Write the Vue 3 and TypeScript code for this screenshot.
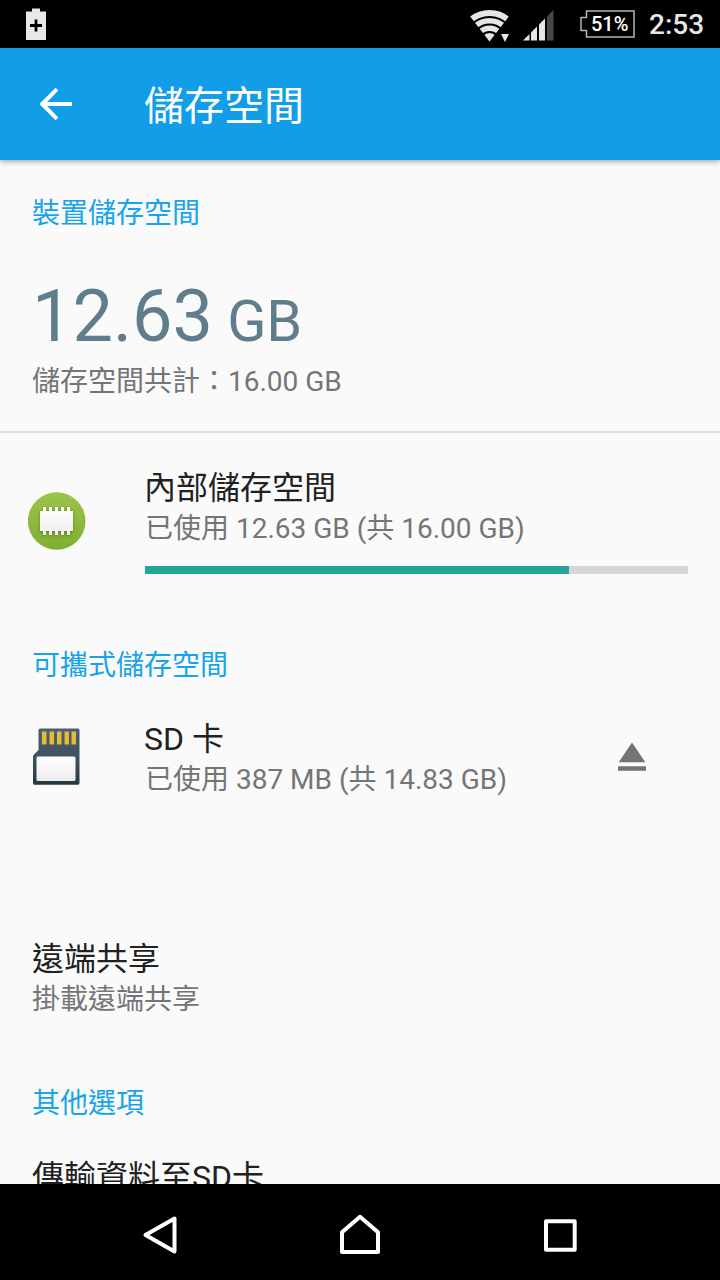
<script setup lang="ts">
const totalGb = 16
const usedGb = 12.5
const usedPercent = (usedGb / totalGb) * 100
</script>

<template>
  <div class="screen">
    <header class="status">
      <svg class="status-saver" width="20" height="32" viewBox="0 0 20 32">
        <path d="M6 0.5h8v3h6V32H0V3.500h6z" fill="#e8e8e8" />
        <path d="M10 11.500v12M4 17.500h12" stroke="#000" stroke-width="2.800" fill="none" />
      </svg>
      <div class="status-right">
        <svg class="wifi" width="40" height="34" viewBox="0 0 40 34">
          <defs>
            <clipPath id="wifi-fan"><path d="M19.500 33.500L-4 3V-4H43V3z" /></clipPath>
          </defs>
          <g clip-path="url(#wifi-fan)" fill="none" stroke="#e6e6e6" stroke-width="5.800">
            <circle cx="19.500" cy="34" r="29" />
            <circle cx="19.500" cy="34" r="21.300" stroke-width="5.600" />
            <circle cx="19.500" cy="34" r="13.800" stroke-width="5.400" />
            <circle cx="19.500" cy="34" r="4.500" stroke-width="9" />
          </g>
          <path d="M30 25.500h10L35 34.500z" fill="#000" stroke="#000" stroke-width="2" />
          <path d="M31 26h8L35 34z" fill="#e6e6e6" />
        </svg>
        <svg class="signal" width="31" height="31" viewBox="0 0 31 31">
          <g fill="#e6e6e6">
            <path d="M0 30.500L6.500 24v6.500z" />
            <path d="M8 22.500L14 16.500v14H8z" />
            <path d="M16 14.500L22 8.500v22h-6z" />
          </g>
          <path d="M24 6.500L30.500 0v30.500H24z" fill="#484848" />
        </svg>
        <div class="battery">
          <svg width="55" height="28" viewBox="0 0 55 28">
            <path d="M6.500 1H54V27H6.500V20.500H1V7.500H6.500z" fill="none" stroke="#b5b5b5" stroke-width="1.500" />
          </svg>
          <span class="battery-label">51%</span>
        </div>
        <span class="clock">2:53</span>
      </div>
    </header>

    <div class="appbar">
      <svg class="back" width="34" height="34" viewBox="0 0 34 34">
        <path d="M33 17H4M18 2.200L3.200 17L18 31.800" fill="none" stroke="#fff" stroke-width="4" />
      </svg>
      <h1 class="title">儲存空間</h1>
    </div>

    <main class="content">
      <section class="summary">
        <h2 class="heading">裝置儲存空間</h2>
        <div class="amount">12.63<span class="unit"> GB</span></div>
        <div class="sub">儲存空間共計：16.00 GB</div>
      </section>

      <section class="row internal">
        <div class="row-icon">
          <svg width="58" height="58" viewBox="0 0 58 58">
            <defs>
              <linearGradient id="disc" x1="0" y1="0" x2="0" y2="1">
                <stop offset="0" stop-color="#9cc54a" />
                <stop offset="1" stop-color="#7fae32" />
              </linearGradient>
              <linearGradient id="chip" x1="0" y1="0" x2="0" y2="1">
                <stop offset="0" stop-color="#fff" />
                <stop offset="1" stop-color="#eee" />
              </linearGradient>
            </defs>
            <circle cx="28.700" cy="29" r="28.800" fill="url(#disc)" />
            <path class="chip" fill="url(#chip)" d="M12 19h3v-4h3v4h3v-4h3v4h3v-4h3v4h3v-4h3v4h3v-4h3v4h3v20h-3v4h-3v-4h-3v4h-3v-4h-3v4h-3v-4h-3v4h-3v-4h-3v4h-3v-4h-3z" />
          </svg>
        </div>
        <div class="row-body">
          <div class="name">內部儲存空間</div>
          <div class="sub">已使用 12.63 GB (共 16.00 GB)</div>
          <div class="bar"><div class="bar-fill" :style="{ width: usedPercent + '%' }"></div></div>
        </div>
      </section>

      <h2 class="heading portable">可攜式儲存空間</h2>
      <section class="row sd">
        <div class="row-icon sd-icon">
          <svg width="48" height="58" viewBox="0 0 48 58">
            <defs>
              <linearGradient id="card" x1="0" y1="0" x2="0" y2="1">
                <stop offset="0" stop-color="#4c6070" />
                <stop offset="0.500" stop-color="#40525f" />
                <stop offset="1" stop-color="#263740" />
              </linearGradient>
              <linearGradient id="label" x1="0" y1="0" x2="0" y2="1">
                <stop offset="0" stop-color="#fff" />
                <stop offset="1" stop-color="#ececec" />
              </linearGradient>
            </defs>
            <path d="M8 1.500H46Q47.500 1.500 47.500 3V56Q47.500 57.700 46 57.700H2.500Q1 57.700 1 56V29.500Q1 28.500 2 27.500L6.500 23V3Q6.500 1.500 8 1.500z" fill="url(#card)" />
            <path d="M10 4.500h4.500v13H10zM17.500 4.500H22v13h-4.500zM25 4.500h4.500v13H25zM32.500 4.500H37v13h-4.500zM39.500 4.500H44v13h-4.500z" fill="#e3bb35" />
            <rect x="4.500" y="29.500" width="39" height="24.500" rx="1.500" fill="url(#label)" />
          </svg>
        </div>
        <div class="row-body">
          <div class="name">SD 卡</div>
          <div class="sub">已使用 387 MB (共 14.83 GB)</div>
        </div>
        <svg class="eject" width="28" height="29" viewBox="0 0 28 29">
          <path d="M14 0.500L27.300 20.300H0.700zM0 24.300H28V28.700H0z" fill="#747474" />
        </svg>
      </section>

      <section class="remote">
        <div class="name">遠端共享</div>
        <div class="sub">掛載遠端共享</div>
      </section>

      <h2 class="heading other">其他選項</h2>
      <div class="name transfer">傳輸資料至SD卡</div>
    </main>

    <nav class="nav">
      <svg width="40" height="40" viewBox="0 0 40 40">
        <path d="M34.500 3.500V36.500L5.500 20z" />
      </svg>
      <svg width="40" height="40" viewBox="0 0 40 40">
        <path d="M20 1.700L38 17.300V37H2V17.300z" />
      </svg>
      <svg width="40" height="40" viewBox="0 0 40 40">
        <path d="M6 6.200H34.700V34.800H6z" />
      </svg>
    </nav>
  </div>
</template>

<style>
body {
  background: #fafafa;
}
</style>

<style scoped>
.screen {
  width: 720px;
  height: 1280px;
  display: flex;
  flex-direction: column;
  overflow: hidden;
  background: #fafafa;
  font-family: Roboto, "Noto Sans CJK TC", sans-serif;
}
.status {
  height: 48px;
  flex: none;
  display: flex;
  justify-content: space-between;
  align-items: flex-start;
  background: #000;
}
.status svg {
  display: block;
}
.status-saver {
  margin: 8px 0 0 26px;
}
.status-right {
  display: flex;
  align-items: flex-start;
  color: #e6e6e6;
}
.wifi {
  margin-top: 8px;
}
.signal {
  margin: 10px 0 0 13px;
}
.battery {
  display: grid;
  margin: 10px 0 0 26px;
}
.battery svg,
.battery-label {
  grid-area: 1 / 1;
}
.battery-label {
  padding-left: 11px;
  font-size: 20px;
  font-weight: 500;
  line-height: 28px;
  color: #fff;
}
.clock {
  width: 56px;
  margin: 0 15px 0 14px;
  font-size: 28px;
  font-weight: 500;
  line-height: 50px;
  white-space: nowrap;
}
.appbar {
  height: 112px;
  flex: none;
  display: flex;
  align-items: center;
  background: #129de9;
  box-shadow: 0 1px 6px rgba(0, 0, 0, 0.4);
  z-index: 1;
}
.back {
  flex: none;
  margin-left: 39px;
}
.title {
  margin: 6px 0 0 71px;
  font-size: 40px;
  font-weight: 400;
  line-height: 48px;
  color: #fff;
}
.content {
  flex: 1;
  min-height: 0;
  overflow: hidden;
}
.heading {
  margin: 0;
  padding-left: 32px;
  font-size: 28px;
  font-weight: 400;
  line-height: 40px;
  color: #17a4ea;
}
.summary {
  padding: 34px 0 29px;
  border-bottom: 2px solid #dcdcdc;
}
.amount {
  height: 84px;
  margin: 41px 0 3px;
  padding-left: 32px;
  font-size: 72px;
  line-height: 84px;
  color: #607d8b;
}
.unit {
  font-size: 57.6px;
  line-height: 1;
}
.summary .sub,
.remote {
  padding-left: 32px;
}
.name {
  font-size: 32px;
  line-height: 40px;
  color: #212121;
}
.sub {
  font-size: 28px;
  line-height: 40px;
  color: #757575;
}
.name + .sub {
  margin-top: 1px;
}
.row {
  display: flex;
  padding-right: 32px;
}
.row-icon {
  flex: none;
  box-sizing: border-box;
  width: 145px;
  padding-left: 28px;
}
.row-icon svg {
  display: block;
}
.chip {
  filter: drop-shadow(0 1px 1.500px rgba(40, 70, 0, 0.5));
}
.row-body {
  flex: 1;
}
.row-body .name {
  margin-left: -1px;
}
.internal {
  padding-top: 35px;
}
.internal .row-icon {
  padding-top: 24px;
}
.bar {
  height: 8px;
  margin-top: 17px;
  background: #d6d6d6;
}
.bar-fill {
  height: 100%;
  background: #26a69a;
}
.portable {
  margin: 72px 0 33px;
}
.row-icon.sd-icon {
  padding: 8px 0 0 32px;
}
.eject {
  margin: 23px 42px 0 0;
}
.remote {
  padding-top: 139px;
}
.other {
  margin: 64px 0 33px;
}
.transfer {
  padding-left: 32px;
}
.nav {
  height: 96px;
  flex: none;
  display: flex;
  justify-content: center;
  gap: 160px;
  padding-top: 31px;
  box-sizing: border-box;
  background: #000;
}
.nav svg {
  flex: none;
  fill: none;
  stroke: #fff;
  stroke-width: 4;
  stroke-linejoin: round;
}
</style>
